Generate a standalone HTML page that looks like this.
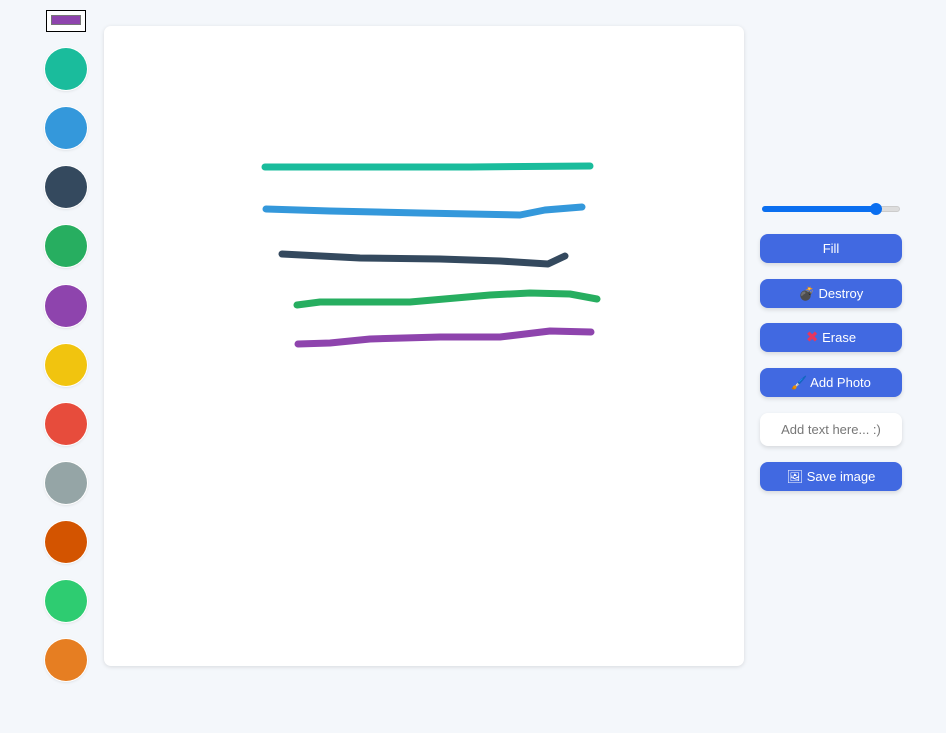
<!DOCTYPE html>
<html><head><style>
body{margin:0;width:946px;height:733px;background:#f4f7fb;font-family:"Liberation Sans","Noto Sans CJK KR",sans-serif;position:relative;overflow:hidden}
.c{position:absolute;left:45px;width:42px;height:42px;border-radius:50%;box-shadow:0 0 0 1px #fff,0 1px 3px rgba(0,0,0,.15)}
.cv{position:absolute;left:104px;top:26px;width:640px;height:640px;background:#fff;border-radius:7px;box-shadow:0 1px 4px rgba(0,0,0,.12)}
.b{position:absolute;left:760px;width:142px;height:29px;background:#4169e1;color:#fff;border-radius:8px;font-size:13px;text-align:center;line-height:29px;box-shadow:0 2px 4px rgba(0,0,0,.12)}
</style></head><body>
<div style="position:absolute;left:46px;top:10px;width:38px;height:20px;border:1px solid #000;background:#fff"><div style="position:absolute;left:4px;top:4px;width:30px;height:10px;background:#8e44ad;border:1px solid #777;box-sizing:border-box"></div></div>
<div class="c" style="top:48px;background:#1abc9c"></div>
<div class="c" style="top:107px;background:#3498db"></div>
<div class="c" style="top:166px;background:#34495e"></div>
<div class="c" style="top:225px;background:#27ae60"></div>
<div class="c" style="top:285px;background:#8e44ad"></div>
<div class="c" style="top:344px;background:#f1c40f"></div>
<div class="c" style="top:403px;background:#e74c3c"></div>
<div class="c" style="top:462px;background:#95a5a6"></div>
<div class="c" style="top:521px;background:#d35400"></div>
<div class="c" style="top:580px;background:#2ecc71"></div>
<div class="c" style="top:639px;background:#e67e22"></div>
<div class="cv"></div>
<svg style="position:absolute;left:0;top:0" width="946" height="733" fill="none" stroke-linecap="round" stroke-linejoin="round" stroke-width="7">
<polyline stroke="#1abc9c" points="265,167 470,167 590,166"/>
<polyline stroke="#3498db" points="266,209 330,211 420,213 520,215 545,210 582,207"/>
<polyline stroke="#34495e" points="282,254 360,258 440,259 500,261 548,264 565,256"/>
<polyline stroke="#27ae60" points="297,305 320,302 410,302 490,295 530,293 570,294 597,299"/>
<polyline stroke="#8e44ad" points="298,344 330,343 370,339 440,337 500,337 550,331 591,332"/>
</svg>
<div style="position:absolute;left:762px;top:206px;width:138px;height:6px;border-radius:3px;background:#ddd;border:1px solid #ccc;box-sizing:border-box"></div>
<div style="position:absolute;left:762px;top:206px;width:114px;height:6px;border-radius:3px;background:#0a6ff0"></div>
<div style="position:absolute;left:870px;top:203px;width:12px;height:12px;border-radius:50%;background:#0a6ff0"></div>
<div class="b" style="top:234px">Fill</div>
<div class="b" style="top:279px">💣 Destroy</div>
<div class="b" style="top:323px"><span style="color:#e8365d;font-size:15px">✖</span> Erase</div>
<div class="b" style="top:368px">🖌️ Add Photo</div>
<div class="b" style="top:413px;height:33px;line-height:33px;background:#fff;color:#777">Add text here... :)</div>
<div class="b" style="top:462px">🖼 Save image</div>
</body></html>
